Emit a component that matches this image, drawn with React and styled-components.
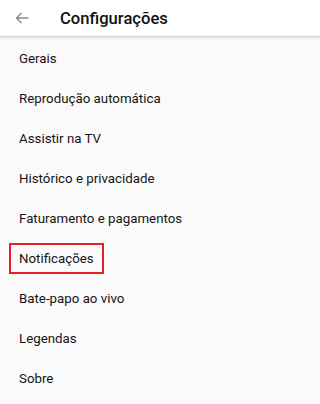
import React from "react";
import styled, { createGlobalStyle } from "styled-components";

const Global = createGlobalStyle`
  html, body { margin: 0; padding: 0; background: #fafafa; }
  body { font-family: Roboto, "Noto Sans", sans-serif; }
`;

const Screen = styled.div`
  width: 100%;
  height: 100vh;
  overflow: hidden;
  background: #fafafa;
  display: flex;
  flex-direction: column;
`;

const Header = styled.header`
  height: 36px;
  flex: none;
  background: #ffffff;
  display: flex;
  align-items: center;
  border-bottom: 1px solid #d4d4d4;
  box-shadow: 0 1px 3px rgba(0, 0, 0, 0.12);
  position: relative;
  z-index: 1;
`;

const BackButton = styled.div`
  width: 15px;
  margin-left: 15px;
  display: flex;
  align-items: center;
  color: #8a8a8a;
`;

const Title = styled.h1`
  margin: 0 0 0 30px;
  font-size: 16.6px;
  font-weight: 500;
  color: #111111;
  letter-spacing: 0;
`;

const List = styled.ul`
  list-style: none;
  margin: 0;
  padding: 1px 0 0 0;
  display: flex;
  flex-direction: column;
`;

const Item = styled.li`
  height: 40px;
  display: flex;
  align-items: center;
  padding-left: 19px;
  font-size: 13.3px;
  color: #151515;
`;

const Label = styled.span`
  display: inline-flex;
  align-items: center;
  height: 26px;
  padding: 1px 8px 0;
  margin-left: -10px;
  border: 2px solid ${(p) => (p.$highlight ? "#e01f26" : "transparent")};
`;

const items = [
  "Gerais",
  "Reprodução automática",
  "Assistir na TV",
  "Histórico e privacidade",
  "Faturamento e pagamentos",
  "Notificações",
  "Bate-papo ao vivo",
  "Legendas",
  "Sobre",
];

export default function App() {
  return (
    <Screen>
      <Global />
      <Header>
        <BackButton>
          <svg width="14" height="12" viewBox="0 0 14 12" fill="none">
            <path d="M13.5 6H1.5M6.5 1L1.5 6l5 5" stroke="currentColor" strokeWidth="1.3" />
          </svg>
        </BackButton>
        <Title>Configurações</Title>
      </Header>
      <List>
        {items.map((t) => (
          <Item key={t}>
            <Label $highlight={t === "Notificações"}>{t}</Label>
          </Item>
        ))}
      </List>
    </Screen>
  );
}
